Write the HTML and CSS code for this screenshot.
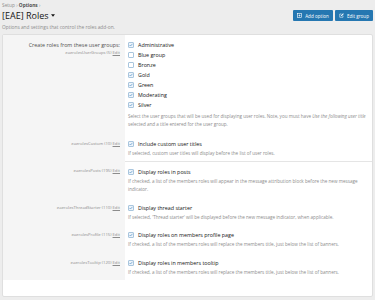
FILE: index.html
```html
<!DOCTYPE html>
<html lang="en">

<head>
    <meta charset="UTF-8">
    <meta name="viewport" content="width=device-width, initial-scale=1.0">
    <title>[EAE] Roles</title>
    <link rel="stylesheet" href="styles.css">
</head>

<body>
    <div class="crumbs">Setup › <b>Options</b> ›</div>

    <div class="title-row">
        <h1>[EAE] Roles
            <svg class="caret" viewBox="0 0 6 4"><path d="M0 0h6L3 4z" /></svg>
        </h1>
        <div class="actions">
            <a class="btn" href="#">
                <svg viewBox="0 0 10 10"><rect x="1" y="1" width="8" height="8" fill="none" stroke="#fff" stroke-width="1.2" /><path d="M5 3v4M3 5h4" stroke="#fff" stroke-width="1.2" /></svg>
                Add option
            </a>
            <a class="btn" href="#">
                <svg viewBox="0 0 10 10"><path d="M5 2H1.5v6.5H8V5.5" fill="none" stroke="#fff" stroke-width="1.1" /><path d="M4 6.2l.4-1.7L8.2.7l1.3 1.3L5.7 5.8z" fill="#fff" /></svg>
                Edit group
            </a>
        </div>
    </div>

    <p class="page-desc">Options and settings that control the roles add-on.</p>

    <div class="panel">
        <div class="row">
            <div class="row-label">
                <div class="label-main">Create roles from these user groups:</div>
                <div class="hint">eaerolesUserGroups (5) <u>Edit</u></div>
            </div>
            <div class="row-field first">
                <label class="check"><span class="box on"><svg viewBox="0 0 4 4"><path d="M.5 2l1 1L3.5.8" /></svg></span>Administrative</label>
                <label class="check"><span class="box"></span>Blue group</label>
                <label class="check"><span class="box"></span>Bronze</label>
                <label class="check"><span class="box on"><svg viewBox="0 0 4 4"><path d="M.5 2l1 1L3.5.8" /></svg></span>Gold</label>
                <label class="check"><span class="box on"><svg viewBox="0 0 4 4"><path d="M.5 2l1 1L3.5.8" /></svg></span>Green</label>
                <label class="check"><span class="box on"><svg viewBox="0 0 4 4"><path d="M.5 2l1 1L3.5.8" /></svg></span>Moderating</label>
                <label class="check"><span class="box on"><svg viewBox="0 0 4 4"><path d="M.5 2l1 1L3.5.8" /></svg></span>Silver</label>
                <div class="desc group-desc">Select the user groups that will be used for displaying user roles. Note, you must have <i>Use the following user</i> <i>title</i> selected and a title entered for the user group.</div>
            </div>
        </div>

        <div class="row">
            <div class="row-label">
                <div class="hint">eaerolesCustom (10) <u>Edit</u></div>
            </div>
            <div class="row-field">
                <label class="check"><span class="box on"><svg viewBox="0 0 4 4"><path d="M.5 2l1 1L3.5.8" /></svg></span>Include custom user titles</label>
                <div class="desc">If selected, custom user titles will display before the list of user roles.</div>
            </div>
        </div>

        <div class="row">
            <div class="row-label">
                <div class="hint">eaerolesPosts (195) <u>Edit</u></div>
            </div>
            <div class="row-field sep">
                <label class="check"><span class="box on"><svg viewBox="0 0 4 4"><path d="M.5 2l1 1L3.5.8" /></svg></span>Display roles in posts</label>
                <div class="desc">If checked, a list of the members roles will appear in the message attribution block before the new message indicator.</div>
            </div>
        </div>

        <div class="row">
            <div class="row-label">
                <div class="hint">eaerolesThreadStarter (110) <u>Edit</u></div>
            </div>
            <div class="row-field">
                <label class="check"><span class="box on"><svg viewBox="0 0 4 4"><path d="M.5 2l1 1L3.5.8" /></svg></span>Display thread starter</label>
                <div class="desc">If selected, 'Thread starter' will be displayed before the new message indicator, when applicable.</div>
            </div>
        </div>

        <div class="row">
            <div class="row-label">
                <div class="hint">eaerolesProfile (115) <u>Edit</u></div>
            </div>
            <div class="row-field">
                <label class="check"><span class="box on"><svg viewBox="0 0 4 4"><path d="M.5 2l1 1L3.5.8" /></svg></span>Display roles on members profile page</label>
                <div class="desc">If checked, a list of the members roles will replace the members title, just below the list of banners.</div>
            </div>
        </div>

        <div class="row">
            <div class="row-label">
                <div class="hint">eaerolesTooltip (120) <u>Edit</u></div>
            </div>
            <div class="row-field">
                <label class="check"><span class="box on"><svg viewBox="0 0 4 4"><path d="M.5 2l1 1L3.5.8" /></svg></span>Display roles in members tooltip</label>
                <div class="desc">If checked, a list of the members roles will replace the members title, just below the list of banners.</div>
            </div>
        </div>
    </div>
</body>

</html>
```

FILE: styles.css
```css
body {
    margin: 0;
    padding: 1px 2px 0;
    background-color: #ededed;
    font-family: "Open Sans", "Noto Sans", sans-serif;
    color: #141414;
}

.crumbs {
    font-size: 4.8px;
    line-height: 8px;
    color: #8c8c8c;
}

.crumbs b {
    color: #505050;
}

.title-row {
    display: flex;
    align-items: center;
    justify-content: space-between;
    height: 11px;
    margin-top: 1px;
}

h1 {
    display: flex;
    align-items: center;
    gap: 2px;
    margin: 0;
    font-size: 9px;
    font-weight: normal;
    line-height: 11px;
}

.caret {
    width: 4px;
    height: 3px;
    fill: #141414;
}

.actions {
    display: flex;
    gap: 2px;
}

.btn {
    display: flex;
    align-items: center;
    gap: 3px;
    height: 11px;
    padding: 0 4px;
    background-color: #2577b1;
    border-radius: 1px;
    color: #fff;
    font-size: 4.6px;
    text-decoration: none;
}

.btn svg {
    width: 5px;
    height: 5px;
}

.page-desc {
    margin: 2px 0 0;
    font-size: 4.8px;
    line-height: 8px;
    color: #8c8c8c;
}

.panel {
    margin-top: 3px;
    padding-bottom: 16px;
    background-color: #fff;
    border: 1px solid #dfdfdf;
    border-radius: 2px;
}

.row {
    display: flex;
}

.row-label {
    flex: none;
    width: 117px;
    padding: 5px 5px 4.5px 0;
    background-color: #f5f5f5;
    text-align: right;
}

.label-main {
    font-size: 5.35px;
    line-height: 10px;
    color: #505050;
}

.hint {
    font-size: 4.2px;
    line-height: 10px;
    color: #8c8c8c;
}

.label-main + .hint {
    line-height: 6px;
}

.row-field {
    flex: 1;
    padding: 5px 6px 4.5px 3px;
}

.row-field.first {
    padding-bottom: 5.5px;
}

.row-field.sep {
    border-top: 1px solid #e5e5e5;
}

.check {
    display: flex;
    align-items: center;
    gap: 4px;
    height: 10px;
    font-size: 5.35px;
    color: #141414;
}

.box {
    display: flex;
    width: 6px;
    height: 6px;
    box-sizing: border-box;
    border: 1px solid #a9c6de;
    border-radius: 1px;
    background-color: #fff;
}

.box.on {
    background-color: #eef4fa;
}

.box svg {
    width: 4px;
    height: 4px;
    fill: none;
    stroke: #3f86c2;
    stroke-width: 0.6;
}

.desc {
    font-size: 4.6px;
    line-height: 8px;
    color: #8c8c8c;
}

.group-desc {
    margin-top: 2px;
}
```
